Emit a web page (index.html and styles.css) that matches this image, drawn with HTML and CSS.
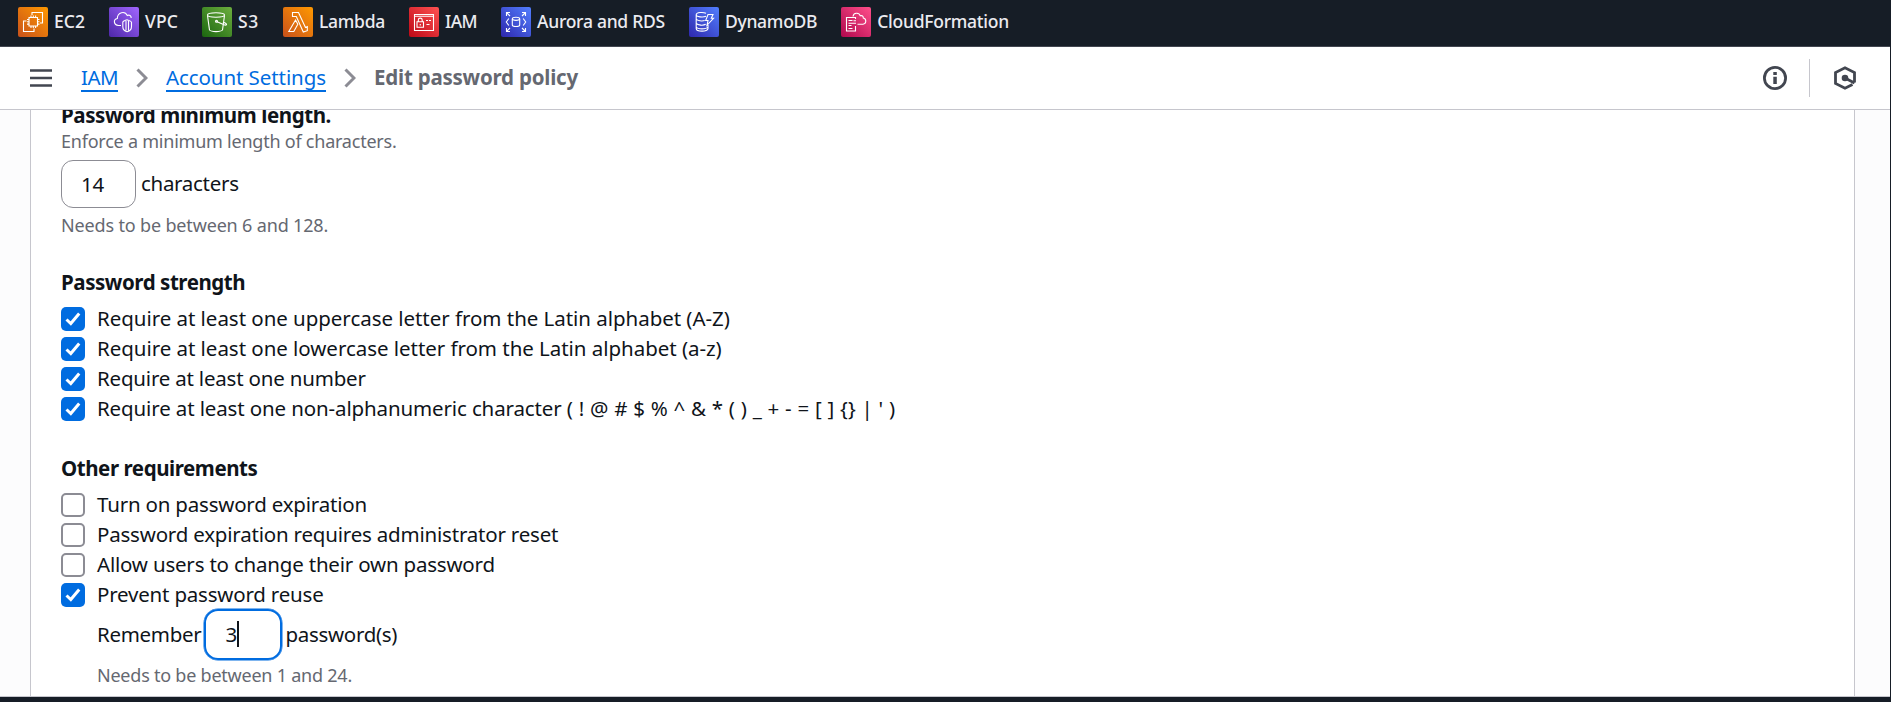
FILE: index.html
```html
<!DOCTYPE html>
<html lang="en">
<head>
<meta charset="utf-8">
<title>Edit password policy</title>
<link rel="stylesheet" href="styles.css">
</head>
<body>
<svg width="0" height="0" class="defs" aria-hidden="true">
  <defs>
    <linearGradient id="orange" x1="0" y1="1" x2="1" y2="0"><stop offset="0" stop-color="#c8511b"/><stop offset="1" stop-color="#f90"/></linearGradient>
    <linearGradient id="purple" x1="0" y1="1" x2="1" y2="0"><stop offset="0" stop-color="#4d27a8"/><stop offset="1" stop-color="#a166ff"/></linearGradient>
    <linearGradient id="green" x1="0" y1="1" x2="1" y2="0"><stop offset="0" stop-color="#1b660f"/><stop offset="1" stop-color="#6cae3e"/></linearGradient>
    <linearGradient id="red" x1="0" y1="1" x2="1" y2="0"><stop offset="0" stop-color="#bd0816"/><stop offset="1" stop-color="#ff5252"/></linearGradient>
    <linearGradient id="blue" x1="0" y1="1" x2="1" y2="0"><stop offset="0" stop-color="#2e27ad"/><stop offset="1" stop-color="#527fff"/></linearGradient>
    <linearGradient id="pink" x1="0" y1="1" x2="1" y2="0"><stop offset="0" stop-color="#b0084d"/><stop offset="1" stop-color="#ff4f8b"/></linearGradient>
    <symbol id="tick" viewBox="0 0 24 24"><path d="M5.500 12.500l4.300 4L18.200 6.500" fill="none" stroke="#fff" stroke-width="3"/></symbol>
    <symbol id="chevron" viewBox="0 0 12 20"><path d="M1.500 1.500l8.500 8.500-8.500 8.500" fill="none" stroke="#8c8c94" stroke-width="3"/></symbol>
  </defs>
</svg>
<div class="window">
  <nav class="favorites">
    <a class="fav ec2"><svg class="tile" viewBox="0 0 30 30"><rect width="30" height="30" rx="2" fill="url(#orange)"/><path d="M14 8V5.500h10.500V16H22M8.500 14H5.500v10.500H16V21.500M11 10.500h8.500v8.500H11zM13 8.500v2m2.300-2v2m2.300-2v2M13 19v2m2.300-2v2m2.300-2v2M9 12.500h2m-2 2.300h2m-2 2.300h2m8.500-4.600h2m-2 2.300h2m-2 2.300h2"/></svg><span>EC2</span></a>
    <a class="fav vpc"><svg class="tile" viewBox="0 0 30 30"><rect width="30" height="30" rx="2" fill="url(#purple)"/><path d="M12 18.500H9.500C4.500 18 4 12.500 8.300 11.500 8.500 5 16 3.500 18.300 8.500c2-1 4 .3 3.900 2.500M18 12.800c-2.600.9-4.200 1.300-4.200 2.400v4.300c0 3 1.700 4.600 4.300 5.300 2.600-.7 4.400-2.300 4.400-5.300v-4.300c0-1.100-1.900-1.500-4.500-2.400zM17 14v9.500M19.500 14v9.500"/></svg><span>VPC</span></a>
    <a class="fav s3"><svg class="tile" viewBox="0 0 30 30"><rect width="30" height="30" rx="2" fill="url(#green)"/><ellipse cx="14" cy="8" rx="8.500" ry="2.200"/><path d="M5.500 8.500l2 14.500c2 2.200 11 2.200 13 0l2-14.500M14.500 14.500l7 3c3 1.300 4 .2 2-1.200l-2.500-1.600"/><circle cx="14.500" cy="14.300" r="1"/></svg><span>S3</span></a>
    <a class="fav lambda"><svg class="tile" viewBox="0 0 30 30"><rect width="30" height="30" rx="2" fill="url(#orange)"/><path d="M9.500 5.500h6l7 15 1.800-.8 0 4-4 1.300-7-15.500h-3.800zM12.500 13l2.300 4.200-4 7.300H5.800z"/></svg><span>Lambda</span></a>
    <a class="fav iam"><svg class="tile" viewBox="0 0 30 30"><rect width="30" height="30" rx="2" fill="url(#red)"/><path d="M5.500 7.500h19v16h-19zM5.500 9.300h19M8 14.800h6.500v5.500H8zM9.300 14.500v-1.600c0-2.400 3.900-2.400 3.900 0v1.600M11.250 17v1.500M17 13.500h2m1 0h2M17.500 17.500h3"/></svg><span>IAM</span></a>
    <a class="fav rds"><svg class="tile" viewBox="0 0 30 30"><rect width="30" height="30" rx="2" fill="url(#blue)"/><path d="M9 9L5.500 5.500M5.500 9V5.500H9M21 9l3.500-3.500M21 5.500h3.500V9M9 21l-3.500 3.500M5.500 21v3.500H9M21 21l3.500 3.500M21 24.500h3.500V21M7.800 11.500L5.300 15l2.500 3.500M22.200 11.500l2.500 3.500-2.500 3.500"/><ellipse cx="15" cy="11.800" rx="3.700" ry="1.600"/><path d="M11.300 12v6c0 2 7.400 2 7.400 0v-6"/></svg><span>Aurora and RDS</span></a>
    <a class="fav dynamo"><svg class="tile" viewBox="0 0 30 30"><rect width="30" height="30" rx="2" fill="url(#blue)"/><path d="M17 6.300c-3-1.500-9.800-1-9.800 1.400s7 2.800 9.800 1.500M7.200 8v13.500c0 3.500 11.800 3.500 11.800 0V18M7.200 12c1 2 6 2.300 8.500 1.500M7.200 16.300c1.500 2.300 7.500 2.300 9.500 1M7.200 20c1.500 2.500 9.800 2.500 11.800 0M19 7.500h5l-1.700 3.800h2.200l-6.500 7 1-4.800h-2.300z"/></svg><span>DynamoDB</span></a>
    <a class="fav cfn"><svg class="tile" viewBox="0 0 30 30"><rect width="30" height="30" rx="2" fill="url(#pink)"/><path d="M14.500 12v-1.500h-9v13.500h9v-5M7.500 13.500h4M7.500 16.300h7.500M7.500 18.500h3M7.500 21.500h4M12.500 13.700h2.500M12 9.500C12.500 5.500 18 5 19.300 8.800c2-.6 3 .4 3 2.200 3.500.8 3.200 6-.3 6.200h-5.500"/></svg><span>CloudFormation</span></a>
  </nav>

  <header class="bar">
    <svg class="menu" viewBox="0 0 22 18"><path d="M0 1.500h22M0 9h22M0 16.500h22" stroke="#424650" stroke-width="2.600"/></svg>
    <div class="crumbs">
      <a class="link service">IAM</a>
      <svg class="chev"><use href="#chevron"/></svg>
      <a class="link">Account Settings</a>
      <svg class="chev"><use href="#chevron"/></svg>
      <b class="here">Edit password policy</b>
    </div>
    <div class="tools">
      <svg class="info" viewBox="0 0 24 24"><circle cx="12" cy="12" r="10.600" fill="none" stroke="#424650" stroke-width="2.800"/><path d="M10.300 6h3.500v3h-3.500zM10.300 10.700h3.500V18h-3.500z" fill="#424650"/></svg>
      <span class="rule"></span>
      <svg class="hex" viewBox="0 0 22 24"><path d="M20.500 16.500v-10L11 1.700 1.500 6.500v11L11 22.300l7.500-3.800M11 12l9.500 5" fill="none" stroke="#424650" stroke-width="2.800"/><circle cx="11" cy="12" r="3.300" fill="#424650"/></svg>
    </div>
  </header>

  <main class="stage">
    <section class="card">
      <h3 class="title first">Password minimum length.</h3>
      <p class="hint lead">Enforce a minimum length of characters.</p>
      <div class="field"><span class="input">14</span><span>characters</span></div>
      <p class="hint below short">Needs to be between 6 and 128.</p>

      <h3 class="title group">Password strength</h3>
      <div class="checks">
        <label class="check wide"><span class="box on"><svg><use href="#tick"/></svg></span><span>Require at least one uppercase letter from the Latin alphabet (A-Z)</span></label>
        <label class="check wide"><span class="box on"><svg><use href="#tick"/></svg></span><span>Require at least one lowercase letter from the Latin alphabet (a-z)</span></label>
        <label class="check"><span class="box on"><svg><use href="#tick"/></svg></span><span>Require at least one number</span></label>
        <label class="check"><span class="box on"><svg><use href="#tick"/></svg></span><span class="mixed">Require at least one non-alphanumeric character <span class="symbols">( ! @ # $ % ^ &amp; * ( ) _ + - = [ ] {} | ' )</span></span></label>
      </div>

      <h3 class="title group">Other requirements</h3>
      <div class="checks">
        <label class="check"><span class="box"></span><span>Turn on password expiration</span></label>
        <label class="check"><span class="box"></span><span>Password expiration requires administrator reset</span></label>
        <label class="check"><span class="box"></span><span>Allow users to change their own password</span></label>
        <label class="check"><span class="box on"><svg><use href="#tick"/></svg></span><span>Prevent password reuse</span></label>
      </div>
      <div class="nested">
        <div class="field"><span>Remember</span><span class="input focus">3<i class="caret"></i></span><span>password(s)</span></div>
        <p class="hint below">Needs to be between 1 and 24.</p>
      </div>
    </section>
  </main>
  <footer class="foot"></footer>
</div>
</body>
</html>
```
FILE: styles.css
```css
* { box-sizing: border-box; }
body { margin: 0; height: 702px; overflow: hidden; background: #161d26; font: 20.5px/30px "Noto Sans", "Open Sans", sans-serif; color: #0f141a; }
.defs { position: absolute; }
.window { display: flex; flex-direction: column; height: 702px; margin-right: 1px; white-space: nowrap; }

/* Favorites bar */
.favorites { flex: none; height: 47px; display: flex; align-items: flex-start; gap: 24px; padding: 7px 0 0 18px; background: #161d26; border-bottom: 1px solid #424650; color: #ebebf0; font-size: 17.5px; font-weight: 500; letter-spacing: -0.27px; }
.fav { display: flex; gap: 6px; line-height: 29px; }
.tile { width: 30px; height: 30px; fill: none; stroke: #fff; stroke-width: 1.1; }
.tile rect { stroke: none; }
.ec2 { letter-spacing: 0.04px; }
.vpc { letter-spacing: 0.15px; }
.s3 { letter-spacing: 0.68px; }
.iam { letter-spacing: -0.58px; }

/* Breadcrumb bar */
.bar { flex: none; height: 63px; display: flex; align-items: center; padding: 0 34px 0 30px; background: #fff; border-bottom: 1px solid #c6c6cd; }
.menu { width: 22px; height: 18px; }
.crumbs { display: flex; align-items: center; margin-left: 29px; }
.link { color: #006ce0; border-bottom: 2px solid #006ce0; line-height: 24px; height: 27px; letter-spacing: -0.08px; }
.service { letter-spacing: -0.55px; }
.here { color: #656871; font-weight: 700; line-height: 28px; padding-bottom: 2px; letter-spacing: -0.22px; }
.chev { width: 12px; height: 20px; margin: 0 18px; }
.tools { display: flex; align-items: center; margin-left: auto; }
.info { width: 24px; height: 24px; }
.rule { width: 1px; height: 38px; background: #c6c6cd; margin: 0 24px 0 22px; }
.hex { width: 22px; height: 24px; }

/* Scrolled form */
.stage { flex: 1; min-height: 0; overflow: hidden; background: #fcfcfd; padding: 0 35px 0 30px; }
.card { height: 600px; background: #fff; border: solid #c6c6cd; border-width: 0 1px; padding-left: 30px; letter-spacing: -0.2px; }
.title { margin: 0; font-size: 20.5px; line-height: 30px; font-weight: 700; letter-spacing: -0.44px; }
.first { margin-top: -10px; letter-spacing: -0.41px; }
.hint { margin: 0; font-size: 18px; line-height: 26px; color: #656871; letter-spacing: -0.23px; }
.hint.lead { margin-top: -2px; margin-bottom: 6px; }
.short { letter-spacing: -0.16px; }
.field { display: flex; align-items: center; gap: 5px; line-height: 28px; letter-spacing: -0.3px; }
.field > span:not(.input) { padding-bottom: 2px; }
.input { width: 75px; height: 48px; border: 1px solid #8c8c94; border-radius: 12px; padding: 0 0 1px 19px; display: flex; align-items: center; }
.focus { border: 2px solid #006ce0; width: 78px; height: 51px; border-radius: 14px; box-shadow: 0 0 0 0.5px #006ce0; }
.caret { width: 2px; height: 26px; background: #0f141a; }
.below { margin-top: 4px; }
.title.group { margin-top: 29px; }
.checks { padding-top: 7px; }
.check { display: flex; align-items: center; height: 30px; gap: 12px; line-height: 28px; }
.check > span:last-child { padding-bottom: 2px; }
.wide { letter-spacing: -0.04px; }
.mixed { letter-spacing: -0.13px; }
.symbols { letter-spacing: 0.22px; }
.box { width: 24px; height: 24px; flex: none; border: 2px solid #8c8c94; border-radius: 5px; }
.box.on { border: 0; background: #006ce0; }
.box svg { display: block; width: 24px; height: 24px; }
.nested { padding-left: 36px; }
.nested .field { margin-top: -1px; gap: 3px; }
.nested .below { margin-top: 2px; }
.foot { flex: none; height: 6px; border-top: 1px solid #c6c6cd; background: #161d26; }
```
